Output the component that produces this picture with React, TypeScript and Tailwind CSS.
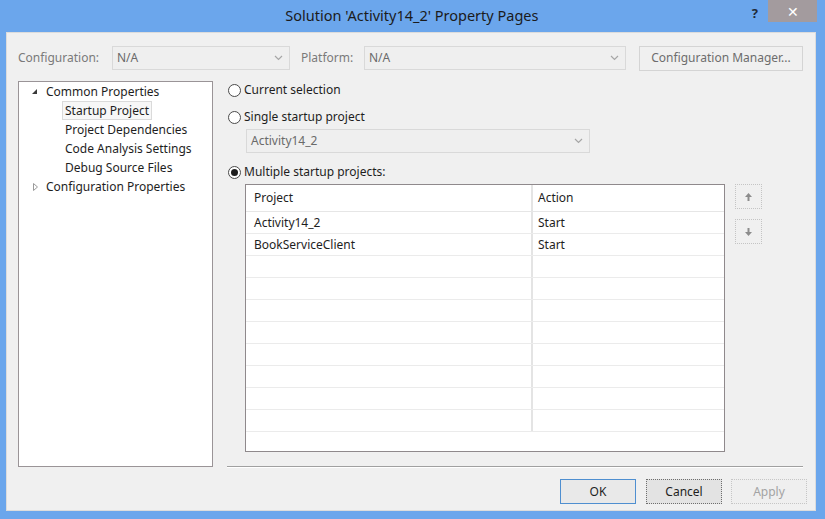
import React from "react";

const font = { fontFamily: '"Noto Sans", "Open Sans", sans-serif' };

const Chevron = ({ color = "#a6a6a6" }: { color?: string }) => (
  <svg width="9" height="6" viewBox="0 0 9 6">
    <path d="M1 1 L4.5 4.5 L8 1" fill="none" stroke={color} strokeWidth="1.2" />
  </svg>
);

const Combo = ({ text, width }: { text: string; width: string }) => (
  <div
    className={`${width} flex h-[24px] items-center justify-between border border-[#d9d9d9] bg-[#efefef] pl-[4px] pr-[6px] text-[12px] text-[#6a6a6a]`}
  >
    <span>{text}</span>
    <Chevron />
  </div>
);

const Radio = ({ label, checked }: { label: string; checked?: boolean }) => (
  <div className="flex h-[16px] items-center text-[12px] text-[#1e1e1e]">
    <span className="ml-[1px] flex h-[13px] w-[13px] items-center justify-center rounded-full border border-[#4a4a4a] bg-white">
      {checked && <span className="h-[7px] w-[7px] rounded-full bg-[#1e1e1e]" />}
    </span>
    <span className="ml-[3px]">{label}</span>
  </div>
);

const ArrowButton = ({ up }: { up?: boolean }) => (
  <div className="flex h-[25px] w-[27px] items-center justify-center border border-dotted border-[#c4c4c4] bg-[#f0f0f0]">
    <svg width="9" height="10" viewBox="0 0 9 10">
      {up ? (
        <>
          <path d="M4.5 1 L8 5 L1 5 Z" fill="#8c8c8c" />
          <rect x="3.5" y="5" width="2" height="4" fill="#8c8c8c" />
        </>
      ) : (
        <>
          <rect x="3.5" y="1" width="2" height="4" fill="#8c8c8c" />
          <path d="M4.5 9 L8 5 L1 5 Z" fill="#8c8c8c" />
        </>
      )}
    </svg>
  </div>
);

const rows = [
  { project: "Activity14_2", action: "Start" },
  { project: "BookServiceClient", action: "Start" },
  { project: "", action: "" },
  { project: "", action: "" },
  { project: "", action: "" },
  { project: "", action: "" },
  { project: "", action: "" },
  { project: "", action: "" },
  { project: "", action: "" },
  { project: "", action: "" },
];

export default function App() {
  return (
    <div className="flex h-[519px] w-[825px] flex-col overflow-hidden bg-[#6ba6ec]" style={font}>
      {/* title bar */}
      <div className="flex h-[32px] items-start">
        <div className="flex h-[31px] flex-1 items-center justify-center pl-[72px] text-[14.5px] text-[#1b1b1b]">
          Solution 'Activity14_2' Property Pages
        </div>
        <div className="mr-[10px] mt-[4px] text-[13px] font-bold text-[#1f2a36]">?</div>
        <div className="mr-[8px] flex h-[22px] w-[49px] items-center justify-center bg-[#a39b9e] text-[14px] text-white">
          ✕
        </div>
      </div>

      {/* client area */}
      <div className="ml-[6px] flex h-[479px] w-[810px] flex-col border border-[#dcdcdc] bg-[#f0f0f0] pl-[11px] pr-[8px] pt-[13px] text-[12px] text-[#1e1e1e]">
        {/* configuration row */}
        <div className="flex h-[24px] items-center">
          <span className="w-[94px] text-[#7a7a7a]">Configuration:</span>
          <Combo text="N/A" width="w-[178px]" />
          <span className="ml-[11px] w-[63px] text-[#7a7a7a]">Platform:</span>
          <Combo text="N/A" width="w-[262px]" />
          <div className="ml-[13px] flex h-[25px] w-[164px] items-center justify-center border border-[#d4d4d4] bg-[#f0f0f0] text-[#6d6d6d]">
            Configuration Manager...
          </div>
        </div>

        {/* main */}
        <div className="mt-[11px] flex">
          {/* tree */}
          <div className="h-[386px] w-[195px] border border-[#9a9497] bg-white">
            <div className="flex h-[19px] items-center">
              <svg className="ml-[12px]" width="7" height="7" viewBox="0 0 7 7">
                <path d="M6 1 L6 6 L1 6 Z" fill="#3a3a3a" />
              </svg>
              <span className="ml-[8px]">Common Properties</span>
            </div>
            <div className="flex h-[19px] items-center">
              <span className="ml-[43px] border border-[#dadada] bg-[#f7f7f7] px-[2px] leading-[17px]">
                Startup Project
              </span>
            </div>
            <div className="flex h-[19px] items-center pl-[46px]">Project Dependencies</div>
            <div className="flex h-[19px] items-center pl-[46px]">Code Analysis Settings</div>
            <div className="flex h-[19px] items-center pl-[46px]">Debug Source Files</div>
            <div className="flex h-[19px] items-center">
              <svg className="ml-[14px]" width="5" height="8" viewBox="0 0 5 8">
                <path d="M0.5 0.5 L4.5 4 L0.5 7.5 Z" fill="none" stroke="#9a9a9a" strokeWidth="1" />
              </svg>
              <span className="ml-[8px]">Configuration Properties</span>
            </div>
          </div>

          {/* right column */}
          <div className="ml-[14px] flex flex-col pt-[1px]">
            <Radio label="Current selection" />
            <div className="mt-[11px]">
              <Radio label="Single startup project" />
            </div>
            <div className="ml-[19px] mt-[4px]">
              <Combo text="Activity14_2" width="w-[344px]" />
            </div>
            <div className="mt-[11px]">
              <Radio label="Multiple startup projects:" checked />
            </div>

            <div className="mt-[4px] flex">
              <div className="ml-[18px] h-[268px] w-[480px] overflow-hidden border border-[#8f898c] bg-white">
                <div className="flex h-[27px] border-b border-[#e6e6e6]">
                  <div className="flex w-[287px] items-center border-r-2 border-[#e4e4e4] pl-[8px]">Project</div>
                  <div className="flex flex-1 items-center pl-[5px]">Action</div>
                </div>
                {rows.map((r, i) => (
                  <div key={i} className="flex h-[22px] border-b border-[#ebebeb]">
                    <div className="flex w-[287px] items-center border-r-2 border-[#e4e4e4] pl-[8px]">
                      {r.project}
                    </div>
                    <div className="flex flex-1 items-center pl-[5px]">{r.action}</div>
                  </div>
                ))}
              </div>
              <div className="ml-[10px] flex flex-col gap-[10px]">
                <ArrowButton up />
                <ArrowButton />
              </div>
            </div>

            <div className="mt-[14px] h-[2px] w-[576px] border-b border-t border-b-white border-t-[#a0a0a0]" />
          </div>
        </div>

        {/* buttons */}
        <div className="mt-[11px] flex justify-end">
          <div className="flex h-[25px] w-[76px] items-center justify-center border border-[#4f8fd0] bg-[#e9e9e9]">OK</div>
          <div className="ml-[10px] flex h-[25px] w-[76px] items-center justify-center border border-dotted border-[#6e6e6e] bg-[#e3e3e3]">
            Cancel
          </div>
          <div className="ml-[9px] flex h-[25px] w-[76px] items-center justify-center border border-dotted border-[#c6c6c6] bg-[#efefef] text-[#a3a3a3]">
            Apply
          </div>
        </div>
      </div>
    </div>
  );
}
